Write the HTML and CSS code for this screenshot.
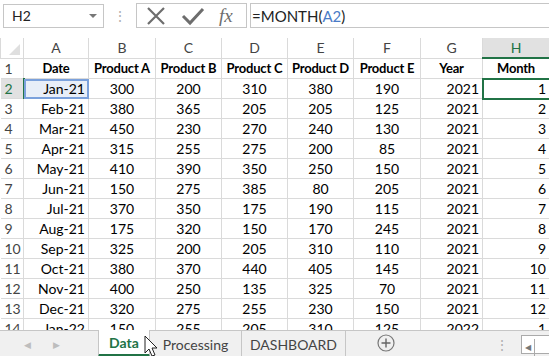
FILE: index.html
```html
<!DOCTYPE html>
<html lang="en">
  <head>
    <title>Sheet - Data</title>
    <link rel="stylesheet" href="styles.css">
  </head>
  <body>
    <div class="app">
      <div class="formulaBar">
        <div class="nameBox">
          <span>H2</span>
          <span class="caret"></span>
        </div>
        <div class="grip">&#8942;</div>
        <div class="fxBox">
          <svg width="22" height="20" viewBox="0 0 22 20"><path d="M3 2 L19 18 M19 2 L3 18" stroke="#6d6d6d" stroke-width="2.2" fill="none"/></svg>
          <svg width="24" height="20" viewBox="0 0 24 20"><path d="M2 10 L9 17 L22 3" stroke="#6d6d6d" stroke-width="3" fill="none"/></svg>
          <span class="fx">fx</span>
        </div>
        <div class="formulaInput">=MONTH(<span class="ref">A2</span>)</div>
      </div>

      <div class="gridWrap">
        <table class="grid">
          <colgroup>
            <col class="cHead"><col class="cA"><col class="cB"><col class="cC"><col class="cD">
            <col class="cE"><col class="cF"><col class="cG"><col class="cH">
          </colgroup>
          <thead>
            <tr>
              <th class="corner"><span class="cornerTri"></span></th>
              <th>A</th><th>B</th><th>C</th><th>D</th><th>E</th><th>F</th><th>G</th>
              <th class="activeCol">H</th>
            </tr>
          </thead>
          <tbody id="rows">
            <tr class="titles">
              <th>1</th>
              <td>Date</td><td>Product A</td><td>Product B</td><td>Product C</td>
              <td>Product D</td><td>Product E</td><td>Year</td><td>Month</td>
            </tr>
          </tbody>
        </table>
      </div>

      <div class="tabBar">
        <div class="tabNav">
          <span class="navArrow">&#9664;</span>
          <span class="navArrow">&#9654;</span>
        </div>
        <div class="tab active tabData">Data</div>
        <div class="tab tabProc">Processing</div>
        <div class="tab tabDash">DASHBOARD</div>
        <svg class="addSheet" width="18" height="18" viewBox="0 0 18 18">
          <circle cx="9" cy="9" r="8" fill="none" stroke="#777" stroke-width="1.2"/>
          <path d="M9 4.5 V13.5 M4.5 9 H13.5" stroke="#666" stroke-width="1.4"/>
        </svg>
        <div class="tabGrip">&#8942;</div>
        <div class="hScroll"><span class="scrollBtn">&#9664;</span></div>
        <svg class="cursor" width="16" height="24" viewBox="0 0 16 24">
          <path d="M1 1 L1 18 L5 14 L8 21 L11 20 L8 13 L13 13 Z" fill="#fff" stroke="#222" stroke-width="1"/>
        </svg>
      </div>
    </div>
    <script>
      const data = [
        ['Jan-21', 300, 200, 310, 380, 190, 2021, 1],
        ['Feb-21', 380, 365, 205, 205, 125, 2021, 2],
        ['Mar-21', 450, 230, 270, 240, 130, 2021, 3],
        ['Apr-21', 315, 255, 275, 200, 85, 2021, 4],
        ['May-21', 410, 390, 350, 250, 150, 2021, 5],
        ['Jun-21', 150, 275, 385, 80, 205, 2021, 6],
        ['Jul-21', 370, 350, 175, 190, 115, 2021, 7],
        ['Aug-21', 175, 320, 150, 170, 245, 2021, 8],
        ['Sep-21', 325, 200, 205, 310, 110, 2021, 9],
        ['Oct-21', 380, 370, 440, 405, 145, 2021, 10],
        ['Nov-21', 400, 250, 135, 325, 70, 2021, 11],
        ['Dec-21', 320, 275, 255, 230, 150, 2021, 12],
        ['Jan-22', 150, 255, 205, 310, 125, 2022, 1]
      ];

      // build the body rows
      const body = document.getElementById('rows');
      data.forEach((row, i) => {
        const tr = document.createElement('tr');
        const num = document.createElement('th');
        num.textContent = i + 2;
        if (i === 0) num.className = 'activeRow';
        tr.appendChild(num);
        row.forEach((val, j) => {
          const td = document.createElement('td');
          td.textContent = val;
          if (j === 0 || j >= 6) td.className = 'right';
          if (i === 0 && j === 0) td.className = 'right refCell';
          if (i === 0 && j === 7) td.className = 'right selCell';
          tr.appendChild(td);
        });
        body.appendChild(tr);
      });
    </script>
  </body>
</html>
```
FILE: styles.css
```css
html, body {
  margin: 0;
  padding: 0;
  background: #fff;
}
.app {
  width: 549px;
  height: 356px;
  overflow: hidden;
  position: relative;
  font-family: Lato, 'Liberation Sans', sans-serif;
  color: #000;
}

/* formula bar */
.formulaBar {
  display: flex;
  align-items: center;
  height: 31px;
  padding-bottom: 7px;
  background: #fff;
}
.nameBox {
  display: flex;
  align-items: center;
  justify-content: space-between;
  box-sizing: border-box;
  width: 101px;
  height: 24px;
  margin-left: 3px;
  padding: 0 6px 0 8px;
  border: 1px solid #c6c6c6;
  font-size: 14px;
  color: #222;
}
.caret {
  width: 0;
  height: 0;
  border-left: 4px solid transparent;
  border-right: 4px solid transparent;
  border-top: 4px solid #777;
}
.grip {
  width: 32px;
  text-align: center;
  color: #b0b0b0;
  font-size: 14px;
}
.fxBox {
  display: flex;
  align-items: center;
  gap: 14px;
  box-sizing: border-box;
  width: 111px;
  height: 25px;
  padding-left: 8px;
  border: 1px solid #c6c6c6;
}
.fx {
  font-family: 'Liberation Serif', serif;
  font-style: italic;
  font-size: 19px;
  color: #6d6d6d;
}
.formulaInput {
  flex: 1;
  box-sizing: border-box;
  height: 25px;
  margin-left: 3px;
  padding: 3px 0 0 1px;
  border-top: 1px solid #c6c6c6;
  border-bottom: 1px solid #c6c6c6;
  border-left: 1px solid #c6c6c6;
  font-size: 15px;
  color: #222;
}
.ref {
  color: #4a7cc7;
}

/* grid */
.gridWrap {
  height: 292px;
  overflow: hidden;
}
.grid {
  border-collapse: collapse;
  table-layout: fixed;
  width: 549px;
  font-size: 14px;
}
.cHead { width: 23px; }
.cA { width: 65px; }
.cB { width: 67px; }
.cC { width: 66px; }
.cD { width: 66px; }
.cE { width: 66px; }
.cF { width: 67px; }
.cG { width: 62px; }
.cH { width: 67px; }
.grid th,
.grid td {
  height: 19px;
  padding: 0 3px;
  border: 1px solid #dadada;
  white-space: nowrap;
  overflow: hidden;
  text-align: center;
  line-height: 19px;
}
.grid thead th {
  font-weight: normal;
  color: #444;
  border-top: none;
  background: #fff;
}
.grid tbody th {
  font-weight: normal;
  color: #444;
  text-align: left;
  padding-left: 4px;
  border-left: none;
}
.corner {
  position: relative;
  border-left: none;
}
.cornerTri {
  position: absolute;
  right: 3px;
  bottom: 3px;
  width: 0;
  height: 0;
  border-left: 11px solid transparent;
  border-bottom: 11px solid #dfdfdf;
}
.grid thead th.activeCol {
  background: #e1e1e1;
  color: #217346;
  border-bottom: 2px solid #217346;
}
.grid tbody th.activeRow {
  background: #e1e1e1;
  color: #217346;
  border-right: 2px solid #217346;
}
.grid .titles td {
  font-weight: bold;
  font-size: 13px;
  letter-spacing: -0.2px;
  padding: 0;
}
.grid td.right {
  text-align: right;
}
.grid td.refCell {
  background: #e8eef8;
  outline: 2px solid #7ba1dc;
  outline-offset: -2px;
}
.grid td.selCell {
  outline: 2px solid #217346;
  outline-offset: -1px;
  position: relative;
}

/* sheet tabs */
.tabBar {
  display: flex;
  align-items: stretch;
  height: 26px;
  border-top: 1px solid #c6c6c6;
  background: #f0f0f0;
  font-size: 14px;
  position: relative;
}
.tabNav {
  display: flex;
  align-items: center;
  gap: 22px;
  width: 98px;
  padding-left: 24px;
  box-sizing: border-box;
  color: #bdbdbd;
  font-size: 9px;
}
.tab {
  display: flex;
  align-items: center;
  justify-content: center;
  box-sizing: border-box;
  color: #444;
  border-right: 1px solid #c6c6c6;
}
.tabData { width: 52px; }
.tabProc { width: 92px; }
.tabDash { width: 104px; }
.tab.active {
  background: #fff;
  color: #217346;
  font-weight: bold;
  border-left: 1px solid #c6c6c6;
  border-bottom: 3px solid #217346;
  margin-top: -1px;
  padding-top: 1px;
}
.addSheet {
  margin: 3px 0 0 31px;
}
.tabGrip {
  margin-left: 100px;
  color: #b0b0b0;
  display: flex;
  align-items: center;
}
.hScroll {
  margin-left: 12px;
  margin-top: 4px;
  height: 17px;
  flex: 1;
  border: 1px solid #aaa;
  border-right: none;
  background: #fff;
}
.scrollBtn {
  display: inline-block;
  width: 12px;
  height: 17px;
  border-right: 1px solid #aaa;
  color: #777;
  font-size: 8px;
  text-align: center;
  line-height: 17px;
}
.cursor {
  position: absolute;
  left: 144px;
  top: 4px;
}
```
